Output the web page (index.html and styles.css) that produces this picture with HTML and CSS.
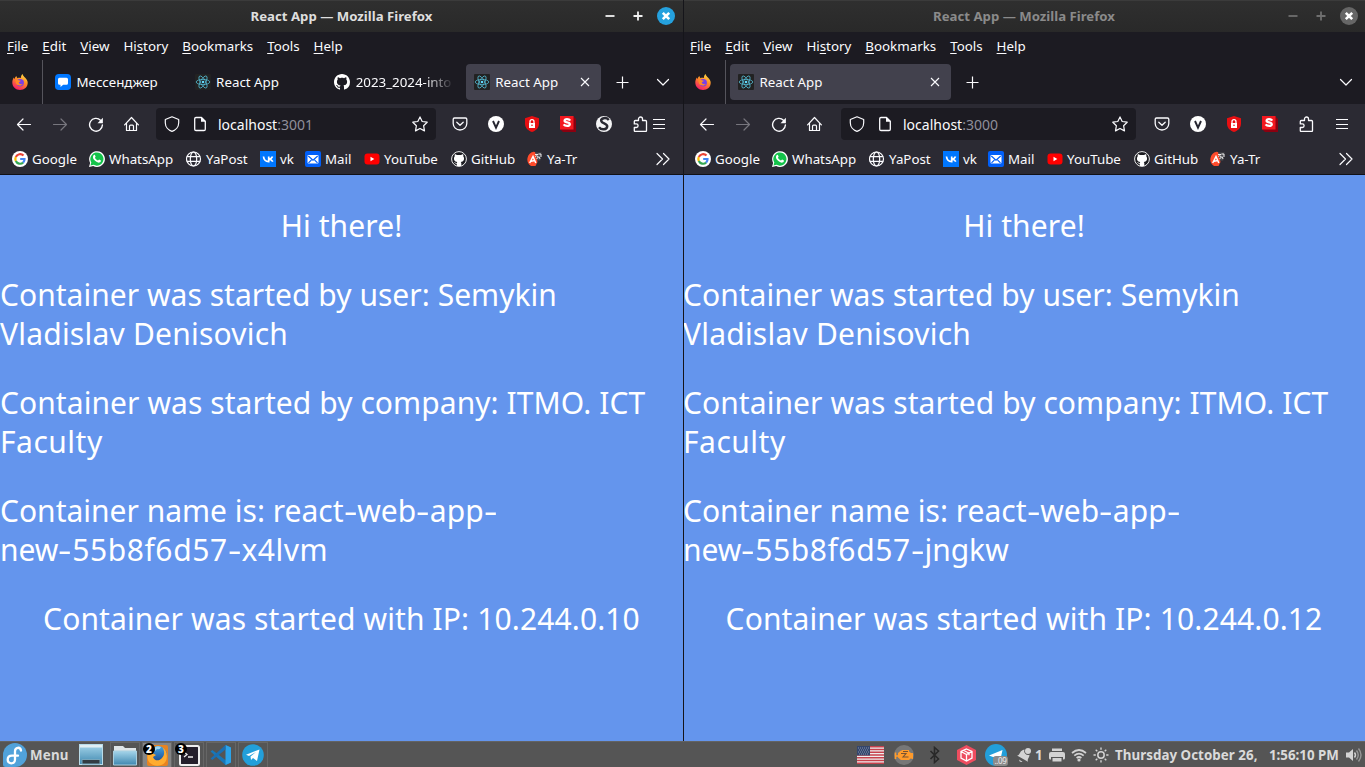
FILE: index.html
```
<!DOCTYPE html>
<html lang="en">
<head>
<meta charset="utf-8">
<title>Desktop</title>
<link rel="stylesheet" href="styles.css">
</head>
<body>
<svg class="sprite" width="0" height="0">
  <defs>
    <linearGradient id="fx" x1="0.8" y1="0" x2="0.3" y2="1"><stop offset="0" stop-color="#ffe14a"/><stop offset=".45" stop-color="#ff8a26"/><stop offset="1" stop-color="#f5196b"/></linearGradient>
    <linearGradient id="blue" x1="0" y1="0" x2="0" y2="1"><stop offset="0" stop-color="#a5d5ea"/><stop offset="1" stop-color="#3f88b0"/></linearGradient>
    <linearGradient id="globe" x1="0" y1="0" x2="0" y2="1"><stop offset="0" stop-color="#43a5e5"/><stop offset="1" stop-color="#123c86"/></linearGradient>
  </defs>
  <symbol id="firefox" viewBox="0 0 16 16"><path fill="url(#fx)" d="M8 16C3.6 16 .3 12.8.3 8.500c0-2 .7-3.700 1.500-5 .2.800.5 1.200.8 1.500.2-1.200 1-2.300 1.900-2.900 0 .9.5 1.600 1.200 2.100C6.500 3.400 8.600 4 8.900 4c0-1.700.5-3.100 1.700-4 .3 1.700 1.500 2.600 2.600 3.800 1.600 1.700 2.500 3.200 2.500 5C15.700 13 12.400 16 8 16z"/><circle cx="8.200" cy="8.700" r="3.700" fill="#7a3fe8"/><path fill="#ff8b26" d="M3.200 6.200c1.200-1 2.700-.7 3.600.1l1.900.4c0 .8-1.700 1-2 1.800.4 1.700 2.600 2.200 4.100 1.200-.7 2.200-5.200 2.600-6.800-.2z"/></symbol>
  <symbol id="messenger" viewBox="0 0 16 16"><rect width="16" height="16" rx="3.800" fill="#07f"/><path fill="#fff" d="M4.500 3.800h7a1.500 1.500 0 0 1 1.500 1.500v4a1.500 1.500 0 0 1-1.500 1.500H8.200L5.500 13v-2.200h-1A1.500 1.500 0 0 1 3 9.300v-4a1.500 1.500 0 0 1 1.500-1.500z"/></symbol>
  <symbol id="react" viewBox="0 0 16 16"><rect width="16" height="16" rx="1" fill="#222"/><g fill="none" stroke="#53b7cf" stroke-width=".8"><ellipse cx="8" cy="8" rx="6.800" ry="2.600"/><ellipse cx="8" cy="8" rx="6.800" ry="2.600" transform="rotate(60 8 8)"/><ellipse cx="8" cy="8" rx="6.800" ry="2.600" transform="rotate(120 8 8)"/></g><circle cx="8" cy="8" r="1.300" fill="#61dafb"/></symbol>
  <symbol id="github" viewBox="0 0 16 16"><path fill="#fff" d="M8 0C3.580 0 0 3.580 0 8c0 3.540 2.290 6.530 5.470 7.590.4.070.55-.17.55-.38 0-.19-.01-.82-.01-1.490-2.010.37-2.530-.49-2.690-.94-.09-.23-.48-.94-.82-1.130-.28-.15-.68-.52-.01-.53.63-.01 1.080.58 1.230.82.72 1.210 1.870.87 2.330.66.07-.52.28-.87.51-1.070-1.780-.2-3.640-.89-3.640-3.950 0-.87.31-1.590.82-2.150-.08-.2-.36-1.020.08-2.120 0 0 .67-.21 2.200.82.64-.18 1.320-.27 2-.27s1.360.09 2 .27c1.530-1.040 2.200-.82 2.200-.82.44 1.100.16 1.920.08 2.120.51.56.82 1.270.82 2.150 0 3.070-1.870 3.750-3.650 3.950.29.25.54.73.54 1.480 0 1.070-.01 1.930-.01 2.200 0 .21.15.46.55.38A8.010 8.010 0 0 0 16 8c0-4.420-3.580-8-8-8z"/></symbol>
  <symbol id="github2" viewBox="0 0 16 16"><circle cx="8" cy="8" r="7.400" fill="#1b1b20" stroke="#eee" stroke-width="1"/><path fill="#fff" d="M5.800 15v-2.400c-1.600.2-1.900-.8-2.700-1.400 1.300-.2 1.500 1 2.700.7l.4-.9C3.400 10.500 2.700 8.600 3 6.700l.7-1.500c-.2-.8 0-1.500.2-2.100l2.100 1c1.300-.3 2.700-.3 4 0l2.100-1c.3.700.4 1.300.2 2.100l.7 1.500c.4 2-.5 3.900-3.200 4.300l.5 1V15z"/></symbol>
  <symbol id="close" viewBox="0 0 16 16"><path d="M4 4l8 8M12 4l-8 8" fill="none" stroke="#fbfbfe" stroke-width="1.100"/></symbol>
  <symbol id="plus" viewBox="0 0 16 16"><path d="M8.500 2.500v12M2.500 8.500h12" fill="none" stroke="#fbfbfe" stroke-width="1.200"/></symbol>
  <symbol id="chev" viewBox="0 0 16 16"><path d="M2.500 5.500L8 11l5.500-5.500" fill="none" stroke="#fbfbfe" stroke-width="1.200" stroke-linecap="round" stroke-linejoin="round"/></symbol>
  <symbol id="back" viewBox="0 0 16 16"><path d="M14.500 8.500h-13M7 3L1.500 8.500 7 14" fill="none" stroke="currentColor" stroke-width="1.200" stroke-linecap="round" stroke-linejoin="round"/></symbol>
  <symbol id="fwd" viewBox="0 0 16 16"><path d="M1.500 8.500h13M9 3l5.500 5.500L9 14" fill="none" stroke="currentColor" stroke-width="1.200" stroke-linecap="round" stroke-linejoin="round"/></symbol>
  <symbol id="reload" viewBox="0 0 16 16"><path d="M12.500 4.200A6.400 6.400 0 1 0 14.400 9" fill="none" stroke="#fbfbfe" stroke-width="1.400" stroke-linecap="round"/><path d="M14.900 1.800v5.400H9.500z" fill="#fbfbfe"/></symbol>
  <symbol id="home" viewBox="0 0 16 16"><path d="M.6 8.800L7.500 1.500l6.900 7.300M2.500 7.500v7h10v-7M5.500 14.500v-4.300q0-1 1-1h2q1 0 1 1v4.300" fill="none" stroke="#fbfbfe" stroke-width="1.200" stroke-linecap="round" stroke-linejoin="round"/></symbol>
  <symbol id="shield" viewBox="0 0 16 16"><path d="M8 .8l6.700 2.700v3.300c0 4-3 7.400-6.700 8.500-3.700-1.100-6.700-4.500-6.700-8.500V3.500z" fill="none" stroke="#fbfbfe" stroke-width="1.200" stroke-linejoin="round"/></symbol>
  <symbol id="page" viewBox="0 0 16 16"><path d="M9.500 1.500H4Q2.700 1.500 2.700 2.800v10.400q0 1.300 1.300 1.300h8q1.300 0 1.300-1.300V5.300z" fill="none" stroke="#fbfbfe" stroke-width="1.300" stroke-linejoin="round"/><path d="M9 1v4.700h4.700z" fill="#fbfbfe"/></symbol>
  <symbol id="star" viewBox="0 0 16 16"><path d="M8 .9l2.200 4.600 5 .7-3.600 3.500.9 5.200L8 12.500l-4.500 2.400.9-5.200L.8 6.200l5-.7z" fill="none" stroke="#fbfbfe" stroke-width="1.200" stroke-linejoin="round"/></symbol>
  <symbol id="pocket" viewBox="0 0 16 16"><path d="M2.500 2h11q1.300 0 1.300 1.300V7.500a6.800 6.500 0 0 1-13.600 0V3.300Q1.200 2 2.500 2zM4.800 6.200L8 9.200l3.200-3" fill="none" stroke="#fbfbfe" stroke-width="1.300" stroke-linecap="round" stroke-linejoin="round"/></symbol>
  <symbol id="vee" viewBox="0 0 16 16"><circle cx="8" cy="8" r="8" fill="#fff"/><path d="M5 5l3 6.700L11 5" fill="none" stroke="#252530" stroke-width="1.900"/></symbol>
  <symbol id="lock" viewBox="0 0 16 16"><path fill="#e80f12" d="M8 0l7 2.300v5.200C15 12 12 14.500 8 16 4 14.500 1 12 1 7.500V2.300z"/><rect x="5" y="7" width="6" height="5" fill="#fff"/><path d="M6 7V5.700a2 2 0 0 1 4 0V7" fill="none" stroke="#fff" stroke-width="1.300"/><circle cx="8" cy="9.200" r=".8" fill="#e80f12"/></symbol>
  <symbol id="sred" viewBox="0 0 16 16"><path fill="#8b0010" d="M13 0l3 3v13H3l-3-3z"/><rect width="13.500" height="13.500" fill="#f3181f"/><path fill="none" stroke="#fff" stroke-width="2.300" d="M10.200 4.700C9 2.700 4.600 2.600 4.600 4.800c0 2.200 5.200 1 5.200 3.400 0 2.400-4.700 2.200-6.200.1"/></symbol>
  <symbol id="scirc" viewBox="0 0 16 16"><circle cx="8" cy="8" r="8" fill="#f4f4f6"/><path fill="none" stroke="#292932" stroke-width="2.500" d="M12.800 4C10 .8 4.800 2.100 5.200 4.900c.4 2.800 6.200 2.300 6 5.500-.2 3.400-5.700 4-8.200.9"/></symbol>
  <symbol id="puzzle" viewBox="0 0 16 16"><path d="M6.500 4.500V3a2 2 0 0 1 4 0v1.500h3q1 0 1 1v9q0 1-1 1H3.300q-1 0-1-1v-3h2a1.800 1.800 0 0 0 0-3.600h-2V5.500q0-1 1-1z" fill="none" stroke="#fbfbfe" stroke-width="1.300" stroke-linejoin="round"/></symbol>
  <symbol id="burger" viewBox="0 0 16 16"><path d="M2 3.500h12M2 8.500h12M2 12.500h12" stroke="#fbfbfe" stroke-width="1.200"/></symbol>
  <symbol id="google" viewBox="0 0 16 16"><circle cx="8" cy="8" r="8" fill="#fff"/><g fill="none" stroke-width="2.200"><path stroke="#ea4335" d="M11.500 4.600A4.700 4.700 0 0 0 3.800 6"/><path stroke="#fbbc05" d="M3.800 6a4.700 4.700 0 0 0 0 4"/><path stroke="#34a853" d="M3.800 10a4.700 4.700 0 0 0 7.300 1.600"/><path stroke="#4285f4" d="M11.100 11.600A4.700 4.700 0 0 0 12.500 8H8.200"/></g></symbol>
  <symbol id="whatsapp" viewBox="0 0 16 16"><path fill="#fff" d="M0 16l1.100-4.100A7.900 7.900 0 1 1 4.200 15z"/><path fill="#14c34a" d="M1.500 14.500l.8-2.900a6.600 6.600 0 1 1 2.300 2.200z"/><path fill="#fff" d="M5.300 3.800c.8-.4 1.200 1.700 1.300 1.800.2.500-.8 1-.6 1.400.7 1.300 1.700 2 2.900 2.500.5.100.8-1.100 1.300-1l1.700.9c.4.300-.3 1.900-1.500 2.200-1.800.4-4.400-1.300-5.600-3-1.300-1.900-1.100-3.900.5-4.800z"/></symbol>
  <symbol id="web" viewBox="0 0 16 16"><g fill="none" stroke="#fbfbfe" stroke-width="1.200"><circle cx="7.500" cy="8" r="7"/><ellipse cx="7.500" cy="8" rx="3.200" ry="7"/><path d="M.8 5.600h13.400M.8 10.400h13.400"/></g></symbol>
  <symbol id="vk" viewBox="0 0 16 16"><rect width="16" height="16" fill="#07f"/><path fill="none" stroke="#fff" stroke-width="1.700" d="M3.500 5.500c.3 3.300 1.900 5 5.200 5.100V5.500M12.500 5.500c-.6 1.500-1.800 2.400-3.700 2.500 2.200.2 3.300 1.200 4 2.700"/></symbol>
  <symbol id="mail" viewBox="0 0 16 16"><rect width="16" height="16" rx="2" fill="#005ff9"/><rect x="2.500" y="4" width="11" height="8.500" rx="1" fill="#fff"/><path d="M3.300 5L8 9.200 12.700 5M3.500 11.800l3-3M12.500 11.800l-3-3" fill="none" stroke="#005ff9" stroke-width="1.200"/></symbol>
  <symbol id="youtube" viewBox="0 0 16 16"><rect x=".5" y="2.500" width="15" height="11" rx="3" fill="#f00"/><path fill="#fff" d="M6.500 5.800v4.400L10.300 8z"/></symbol>
  <symbol id="yatr" viewBox="0 0 16 16"><path fill="#4a4a50" d="M8 1.500h6.700l-1.500 8H9z"/><path fill="#ff4b2b" d="M6.500 .8A7.800 7.800 0 0 0 4 15h4.500l2-4L8 1z"/><path fill="none" stroke="#fff" stroke-width="1.500" d="M2.700 12l3.300-6.500L8.800 12M4 10.200l4-.6"/><path fill="none" stroke="#fff" stroke-width=".9" d="M8 3.500h3.200M8.300 5.500q1.500-1.500 2.700 0t-1.500 2M11.500 3H14v3M12 5.500l1 2.500"/></symbol>
  <symbol id="more" viewBox="0 0 16 16"><path d="M1 2.500L6.500 8 1 13.500M7.500 2.500L13 8l-5.500 5.500" fill="none" stroke="#fbfbfe" stroke-width="1.200" stroke-linecap="round" stroke-linejoin="round"/></symbol>
  <symbol id="min" viewBox="0 0 16 16"><path d="M3.500 8h9" stroke="currentColor" stroke-width="1.800"/></symbol>
  <symbol id="max" viewBox="0 0 16 16"><path d="M3.500 8h9M8 3.500v9" stroke="currentColor" stroke-width="1.800"/></symbol>
  <symbol id="wclose" viewBox="0 0 18 18"><circle cx="9" cy="9" r="9" fill="currentColor"/><path d="M5.800 5.800l6.400 6.400M12.200 5.800l-6.400 6.400" stroke="#fff" stroke-width="2.600"/></symbol>
</svg>

<div class="desktop">
  <div class="windows">
    <section class="window focused">
      <header class="titlebar"><span class="title">React App — Mozilla Firefox</span>
        <div class="controls"><svg><use href="#min"/></svg><svg><use href="#max"/></svg><svg class="x"><use href="#wclose"/></svg></div></header>
      <nav class="menubar"><span><u>F</u>ile</span><span><u>E</u>dit</span><span><u>V</u>iew</span><span>Hi<u>s</u>tory</span><span><u>B</u>ookmarks</span><span><u>T</u>ools</span><span><u>H</u>elp</span></nav>
      <div class="tabs">
        <div class="pin"><svg><use href="#firefox"/></svg></div>
        <div class="tab"><svg><use href="#messenger"/></svg><span>Мессенджер</span></div>
        <div class="tab"><svg><use href="#react"/></svg><span>React App</span></div>
        <div class="tab fade"><svg><use href="#github"/></svg><span>2023_2024-into</span></div>
        <div class="tab active"><svg><use href="#react"/></svg><span>React App</span><svg class="tabclose"><use href="#close"/></svg></div>
        <svg class="newtab"><use href="#plus"/></svg>
        <svg class="alltabs"><use href="#chev"/></svg>
      </div>
      <div class="navbar">
        <i><svg><use href="#back"/></svg></i><i class="off"><svg><use href="#fwd"/></svg></i><i><svg><use href="#reload"/></svg></i><i><svg><use href="#home"/></svg></i>
        <div class="url"><svg><use href="#shield"/></svg><svg><use href="#page"/></svg><span class="addr">localhost<em>:3001</em></span><svg><use href="#star"/></svg></div>
        <i><svg><use href="#pocket"/></svg></i><i><svg><use href="#vee"/></svg></i><i><svg><use href="#lock"/></svg></i><i><svg><use href="#sred"/></svg></i><i><svg><use href="#scirc"/></svg></i><i><svg><use href="#puzzle"/></svg></i><i class="tight"><svg><use href="#burger"/></svg></i>
      </div>
      <div class="bookmarks">
        <a><svg><use href="#google"/></svg>Google</a><a><svg><use href="#whatsapp"/></svg>WhatsApp</a><a><svg><use href="#web"/></svg>YaPost</a><a><svg><use href="#vk"/></svg>vk</a><a><svg><use href="#mail"/></svg>Mail</a><a><svg><use href="#youtube"/></svg>YouTube</a><a><svg><use href="#github2"/></svg>GitHub</a><a><svg><use href="#yatr"/></svg>Ya-Tr</a><svg><use href="#more"/></svg>
      </div>
      <main class="page">
        <p class="l1">Hi there!</p>
        <p><span class="l2">Container was started by user: Semykin</span><br><span class="l3">Vladislav Denisovich</span></p>
        <p><span class="l4">Container was started by company: ITMO. ICT</span><br><span class="l5">Faculty</span></p>
        <p><span>Container name is: react<s>-</s>web<s>-</s>app<s>-</s></span><br><span>new<s>-</s><span class="hash">55b8f6d57</span><s>-</s><span class="l7">x4lvm</span></span></p>
        <p class="l8">Container was started with IP: 10.244.0.10</p>
      </main>
    </section>

    <section class="window second">
      <header class="titlebar"><span class="title">React App — Mozilla Firefox</span>
        <div class="controls"><svg><use href="#min"/></svg><svg><use href="#max"/></svg><svg class="x"><use href="#wclose"/></svg></div></header>
      <nav class="menubar"><span><u>F</u>ile</span><span><u>E</u>dit</span><span><u>V</u>iew</span><span>Hi<u>s</u>tory</span><span><u>B</u>ookmarks</span><span><u>T</u>ools</span><span><u>H</u>elp</span></nav>
      <div class="tabs">
        <div class="pin"><svg><use href="#firefox"/></svg></div>
        <div class="tab active wide"><svg><use href="#react"/></svg><span>React App</span><svg class="tabclose"><use href="#close"/></svg></div>
        <svg class="newtab"><use href="#plus"/></svg>
        <svg class="alltabs"><use href="#chev"/></svg>
      </div>
      <div class="navbar">
        <i><svg><use href="#back"/></svg></i><i class="off"><svg><use href="#fwd"/></svg></i><i><svg><use href="#reload"/></svg></i><i><svg><use href="#home"/></svg></i>
        <div class="url"><svg><use href="#shield"/></svg><svg><use href="#page"/></svg><span class="addr">localhost<em>:3000</em></span><svg><use href="#star"/></svg></div>
        <i><svg><use href="#pocket"/></svg></i><i><svg><use href="#vee"/></svg></i><i><svg><use href="#lock"/></svg></i><i><svg><use href="#sred"/></svg></i><i><svg><use href="#puzzle"/></svg></i><i><svg><use href="#burger"/></svg></i>
      </div>
      <div class="bookmarks">
        <a><svg><use href="#google"/></svg>Google</a><a><svg><use href="#whatsapp"/></svg>WhatsApp</a><a><svg><use href="#web"/></svg>YaPost</a><a><svg><use href="#vk"/></svg>vk</a><a><svg><use href="#mail"/></svg>Mail</a><a><svg><use href="#youtube"/></svg>YouTube</a><a><svg><use href="#github2"/></svg>GitHub</a><a><svg><use href="#yatr"/></svg>Ya-Tr</a><svg><use href="#more"/></svg>
      </div>
      <main class="page">
        <p class="l1">Hi there!</p>
        <p><span class="l2">Container was started by user: Semykin</span><br><span class="l3">Vladislav Denisovich</span></p>
        <p><span class="l4">Container was started by company: ITMO. ICT</span><br><span class="l5">Faculty</span></p>
        <p><span>Container name is: react<s>-</s>web<s>-</s>app<s>-</s></span><br><span>new<s>-</s><span class="hash">55b8f6d57</span><s>-</s>jngkw</span></p>
        <p class="l8">Container was started with IP: 10.244.0.12</p>
      </main>
    </section>
  </div>

  <footer class="taskbar">
    <div class="start"><svg width="24" height="24" viewBox="0 0 24 24"><path fill="#51a2da" d="M12 0a12 12 0 1 1 0 24H2.500Q0 24 0 21.500V12A12 12 0 0 1 12 0z"/><path fill="none" stroke="#fff" stroke-width="2.300" stroke-linecap="round" d="M18 7.500c-.7-4-6-3.500-6 .8v8.200c0 5-7.300 5.200-7.300.2 0-2.800 2-4 4.300-4h6"/></svg><span>Menu</span></div>
    <svg class="show" width="24" height="22" viewBox="0 0 24 22"><rect x=".5" y=".5" width="23" height="20" fill="url(#blue)" stroke="#b9dbe8"/><rect x="1" y="1" width="22" height="2.500" fill="#e0edf2"/><path d="M3 20v-4.500h18V20z" fill="#333c43" stroke="#75a6bd"/></svg>
    <div class="task"><svg width="24" height="24" viewBox="0 0 24 24"><path d="M1 3h9l2 2h11v16H1z" fill="#dfe5e8"/><path d="M.5 8h23v14H.5z" fill="url(#blue)" stroke="#a8cede"/></svg></div>
    <div class="task on"><svg width="24" height="24" viewBox="0 0 24 24"><rect x="2" y="2" width="21" height="21" rx="2" fill="#e88320"/><circle cx="13" cy="12" r="9" fill="url(#globe)"/><path fill="#ffac2f" d="M2.500 9c1 2 3 0 5.500 1.500l3 1.500-3 2c1.500 4 6 4.500 9 1 3-3 2.500-7.500.5-10.500 5 3 6 11 2 15.500-5 5-16 3-17-5z"/><path fill="#9fd9f5" d="M9 5q3-3 7-1-1 3-4 2l-2 2z"/></svg><b>2</b></div>
    <div class="task"><svg width="24" height="24" viewBox="0 0 24 24"><rect x="3" y="3" width="19" height="19" rx="1.500" fill="#241f2b" stroke="#eee" stroke-width="2"/><path d="M7 9l3 2.500L7 14M11 14h5" fill="none" stroke="#eee" stroke-width="1.300"/></svg><b>3</b></div>
    <div class="task"><svg width="24" height="24" viewBox="0 0 24 24"><path fill="#1877b9" d="M16.500 2L22 4.500v15L16.500 22 1.500 8.500 3.300 7 17 17.500v-11z"/><path fill="#2ba3ea" d="M16.500 2L22 4.500v15L16.500 22z"/><path fill="#1a6fb3" d="M1.500 15.500L16.500 2v4.600L3.300 17z"/></svg></div>
    <div class="task"><svg width="24" height="24" viewBox="0 0 24 24"><circle cx="12" cy="12" r="10.800" fill="#229fda"/><path fill="#fff" d="M5 11.700L18.500 6.500 16 18l-4-3-2 2-.5-3.500L15 9l-7 4z"/></svg></div>

    <div class="tray">
      <svg class="flag" width="27" height="18" viewBox="0 0 27 18"><rect width="27" height="18" fill="#eee"/><path d="M0 .7h27M0 3.500h27M0 6.300h27M0 9h27M0 11.800h27M0 14.500h27M0 17.300h27" stroke="#c7414c" stroke-width="1.400"/><rect width="13" height="9.500" fill="#34466d"/><path d="M1 2h11M2 4h10M1 6h11M2 8h10" stroke="#9ba7bf" stroke-width=".8" stroke-dasharray="1 1"/></svg>
      <svg class="engine" width="20" height="20" viewBox="0 0 20 20"><circle cx="10" cy="10" r="10" fill="#777"/><path d="M1.500 7.500v6.500M2 11h2" stroke="#ff9b2b" stroke-width="1.600"/><path fill="#ff9b2b" d="M4 8l3-2.500h1V5h7v1.500l2 1.500h2v6l-2.500-.5L15 15H7l-3-2.500z"/><path d="M7 8.500h5l-3 3.500h5.500M9 6.500h5" fill="none" stroke="#775333" stroke-width="1.100"/></svg>
      <svg class="bt" width="12" height="18" viewBox="0 0 12 18"><path d="M1.500 5l8 8L5.500 16.500v-15L9.500 5l-8 8" fill="none" stroke="#292929" stroke-width="1.600"/></svg>
      <svg class="hex" width="19" height="20" viewBox="0 0 19 20"><path d="M9.500 0L19 5v10l-9.500 5L0 15V5z" fill="#ee4d5f"/><path d="M9.500 4l5.500 2.500v6.500l-5.500 3-5.500-3V6.500zM4 6.500L9.500 9.500l5.500-3M9.500 9.500V16M6.500 5.300l5.500 3v2" fill="none" stroke="#fff" stroke-width="1.300"/></svg>
      <div class="tg"><svg width="22" height="22" viewBox="0 0 22 22"><circle cx="11" cy="11" r="11" fill="#229fda"/><path fill="#fff" d="M4 11.500L17.500 6l-1.500 7H8z"/></svg><span>..09</span></div>
      <svg class="bell" width="16" height="16" viewBox="0 0 16 16"><path fill="#d3d3d3" d="M1 8.500C4 9 3.500 3 8.500 2.500a4 4 0 0 0 5 5.300c0 3-2.500 4-1.500 7zM3 12.500l3.500 2.300Q3.500 16 3 12.500z"/><circle cx="12" cy="4" r="3" fill="#d3d3d3"/></svg>
      <span class="one">1</span>
      <svg class="printer" width="16" height="16" viewBox="0 0 16 16"><path fill="#d3d3d3" d="M3 1.500h10V4H3zM2 5h12q2 0 2 2v4q0 1.500-1.500 1.500H14V10H2v2.500h-.5Q0 12.500 0 11V7q0-2 2-2zM3.500 11h9v3.500h-9z"/></svg>
      <svg class="wifi" width="16" height="14" viewBox="0 0 16 14"><path d="M1 5q7-6 14 0M3.300 7.600q4.700-4 9.400 0M5.600 10q2.400-2 4.800 0" fill="none" stroke="#d3d3d3" stroke-width="1.700"/><circle cx="8" cy="12" r="1.600" fill="#d3d3d3"/></svg>
      <svg class="sun" width="16" height="16" viewBox="0 0 16 16"><circle cx="8" cy="8" r="3.200" fill="none" stroke="#d3d3d3" stroke-width="1.500"/><path d="M8 .5v2.300M8 13.200v2.300M.5 8h2.300M13.200 8h2.300M2.700 2.700l1.600 1.600M11.700 11.700l1.600 1.600M2.700 13.300l1.600-1.600M11.700 4.300l1.600-1.600" stroke="#d3d3d3" stroke-width="1.400"/></svg>
      <span class="date">Thursday October 26,</span><span class="time">1:56:10 PM</span>
      <svg class="vol" width="16" height="16" viewBox="0 0 16 16"><path fill="#d3d3d3" d="M0 5.500h3L7 2v12l-4-3.500H0z"/><path d="M8.500 5.500q2 2.500 0 5" fill="none" stroke="#d3d3d3" stroke-width="1.400"/><path d="M10.500 3.500q3.500 4.500 0 9M12.500 1.500q5 6.500 0 13" fill="none" stroke="#969696" stroke-width="1.400"/></svg>
    </div>
  </footer>
</div>
</body>
</html>
```
FILE: styles.css
```
* { box-sizing: border-box; }
body { margin: 0; font-family: "Noto Sans", sans-serif; font-size: 13.333px; color: #fbfbfe; overflow: hidden; }
svg { flex: none; display: block; }
.sprite { position: absolute; }
.desktop { width: 1365px; height: 767px; display: flex; flex-direction: column; }
.windows { flex: 1; display: grid; grid-template-columns: 683px 682px; min-height: 0; }
.window { display: flex; flex-direction: column; overflow: hidden; background: #1c1b22; position: relative; }
.window svg { width: 16px; height: 16px; }
.second::before { content: ""; position: absolute; left: 0; top: 0; width: 1px; height: 100%; background: #15151a; z-index: 2; }

.titlebar { height: 32px; flex: none; background: linear-gradient(#2f2f2f, #292929); border-top: 1px solid #3b3b3b; position: relative; display: flex; align-items: center; justify-content: center; color: #8a8a8a; }
.title { font-weight: 700; font-size: 13.200px; line-height: 28px; padding-bottom: 2px; white-space: nowrap; }
.focused .titlebar { color: #dedede; }
.controls { position: absolute; right: 8px; top: 0; height: 30px; display: flex; align-items: center; gap: 12px; color: #6f6f6f; }
.second .controls { right: 7px; }
.focused .controls { color: #f1f1f1; }
.controls .x { width: 18px; height: 18px; margin-left: -1px; color: #666; }
.focused .controls .x { color: #25a1de; }

.menubar { height: 28px; flex: none; display: flex; align-items: center; }
.menubar span { padding: 0 7px; }
.menubar u { text-underline-offset: 2px; text-decoration-skip-ink: none; }

.tabs { height: 44px; flex: none; display: flex; align-items: center; }
.pin { width: 43px; height: 44px; padding-left: 12px; border-right: 1px solid #55545c; display: flex; align-items: center; margin-right: 4px; }
.tab { width: 135px; height: 36px; margin-right: 4.600px; padding: 0 8px; display: flex; align-items: center; gap: 5.500px; border-radius: 4px; white-space: nowrap; flex: none; }
.tab span { flex: 1; }
.active { background: #42414d; }
.wide { width: 221px; }
.fade span { width: 98px; flex: none; -webkit-mask-image: linear-gradient(90deg, #000 70%, transparent); mask-image: linear-gradient(90deg, #000 70%, transparent); }
.newtab { margin-left: 9px; }
.second .newtab { margin-left: 8px; }
.alltabs { margin-left: auto; margin-right: 12px; }
.second .alltabs { margin-right: 11px; }

.navbar { height: 40px; flex: none; background: #2b2a33; display: flex; align-items: center; padding-left: 6px; }
.navbar i { width: 36px; flex: none; display: flex; justify-content: center; font-style: normal; }
.navbar .off { color: #77767e; }
.navbar .tight { margin-left: -17px; }
.url { width: 280px; height: 32px; margin: 0 6px; padding: 0 8px; background: #1c1b22; border-radius: 4px; display: flex; align-items: center; gap: 12px; font-size: 14px; }
.addr { flex: 1; margin-left: -2px; }
.addr em { font-style: normal; color: #8f8f9a; }
.second .url { width: 295px; margin: 0 8px; }

.bookmarks { height: 31px; flex: none; background: #2b2a33; border-bottom: 1px solid #111116; display: grid; grid-template-columns: 77px 97px 74px 45px 59px 87px 76px 129px 16px; padding-left: 12px; align-items: center; }
.bookmarks a { display: flex; align-items: center; gap: 4px; white-space: nowrap; }

.page { flex: 1; background: #6495ed; color: #fff; font-size: 30px; line-height: 39px; display: flex; flex-direction: column; padding-top: 31px; white-space: nowrap; }
.page p { margin: 0 0 30px; }
.page s { display: inline-block; text-decoration: none; transform: scaleX(1.400); margin: 0 2px; }
.page .l1, .page .l8 { text-align: center; }
.l1 { letter-spacing: .1px; }
.l2 { letter-spacing: .03px; }
.l3 { letter-spacing: .22px; }
.l4 { letter-spacing: .07px; }
.l5 { letter-spacing: .5px; }
.hash { letter-spacing: .6px; }
.l7 { letter-spacing: .5px; }
.l8 { letter-spacing: .12px; }

.taskbar { height: 26px; flex: none; background: #555; border-top: 1px solid #636363; display: flex; align-items: center; color: #dadada; font-weight: 700; overflow: hidden; }
.start { width: 79px; padding-left: 3px; display: flex; align-items: center; gap: 3px; }
.start span { letter-spacing: .2px; }
.show { margin-right: 7px; }
.task { width: 30px; height: 26px; margin-right: 2px; border: 1px solid #666; border-bottom: 0; position: relative; display: flex; align-items: center; justify-content: center; flex: none; }
.on { background: #858585; }
.task b { position: absolute; left: 0; top: 0; width: 12px; height: 12px; border-radius: 50%; background: #000; color: #fff; font-size: 10px; line-height: 12px; text-align: center; }
.tray { margin-left: auto; width: 508px; display: flex; align-items: center; }
.engine { margin-left: 10px; }
.bt { margin-left: 15px; }
.hex { margin-left: 16px; }
.tg { margin-left: 9px; position: relative; }
.tg span { position: absolute; right: -1px; bottom: 0; width: 15px; height: 10px; background: #8b8b8b; border-radius: 3px; color: #eee; font-size: 8px; line-height: 10px; font-weight: 400; text-align: center; letter-spacing: -.4px; }
.bell { margin-left: 9px; }
.one { width: 9px; margin: 0 5px 0 3px; }
.wifi { margin-left: 6px; }
.sun { margin-left: 6px; }
.date { width: 154px; margin-left: 6px; white-space: nowrap; letter-spacing: .05px; }
.time { width: 77px; white-space: nowrap; }
```
